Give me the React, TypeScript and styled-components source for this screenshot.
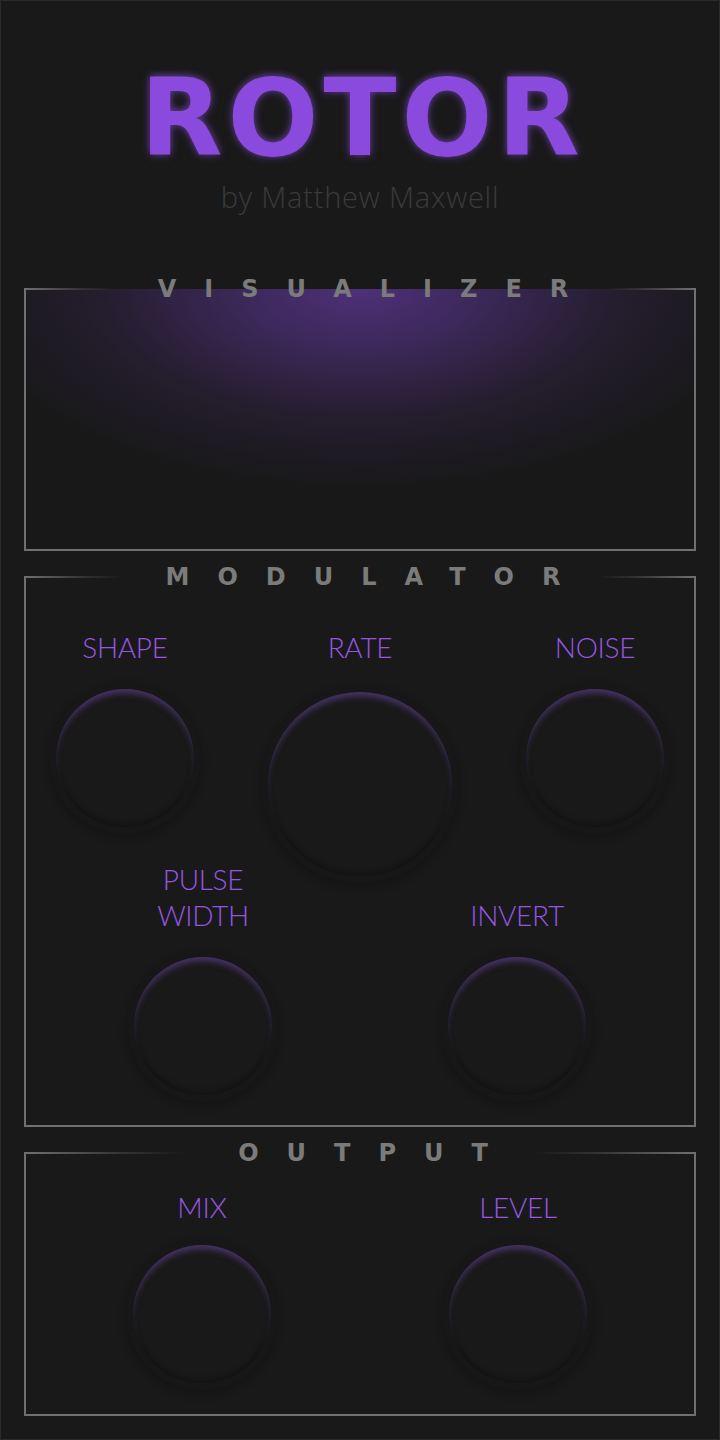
import React from "react";
import styled, { createGlobalStyle } from "styled-components";

const Global = createGlobalStyle`
  html, body { margin: 0; padding: 0; background: #191919; }
  * { box-sizing: border-box; }
`;

const Page = styled.div`
  width: 720px;
  height: 1440px;
  border: 1px solid #2b2b2b;
  background: #191919;
  padding: 0 23px;
  display: flex;
  flex-direction: column;
  gap: 26px;
`;

const Header = styled.header`
  display: flex;
  flex-direction: column;
  align-items: center;
  padding-top: 74px;
  margin-bottom: 48px;
`;

const Logo = styled.h1`
  margin: 0;
  font-family: "DejaVu Sans", sans-serif;
  font-weight: 700;
  font-size: 107px;
  line-height: 86px;
  letter-spacing: 5px;
  padding-left: 5px;
  color: #8a4ade;
  text-shadow: 0 0 8px rgba(150, 80, 240, 0.55), 0 -2px 6px rgba(190, 140, 255, 0.15);
`;

const Byline = styled.div`
  margin-top: 18px;
  font-family: "Open Sans", sans-serif;
  font-weight: 300;
  font-size: 29px;
  line-height: 36px;
  letter-spacing: 0.8px;
  color: #3b3b3b;
`;

const Frame = styled.section<{ $height?: number; $glow?: boolean; $pb?: number }>`
  display: flex;
  flex-direction: column;
  border: 2px solid #707070;
  border-top: none;
  ${(p) => (p.$height ? `height: ${p.$height}px;` : "")}
  padding-bottom: ${(p) => p.$pb ?? 30}px;
  background: ${(p) =>
    p.$glow
      ? "radial-gradient(ellipse 400px 200px at 50% 0%, rgba(78, 48, 120, 1) 0%, rgba(64, 42, 96, 0.9) 30%, rgba(44, 33, 60, 0.6) 65%, rgba(24, 24, 24, 0) 100%), #181818"
      : "#191919"};
`;

const Head = styled.div`
  display: flex;
  align-items: center;
  height: 24px;
  margin: -12px -2px 0;
`;

const Rule = styled.div<{ $dir: "left" | "right" }>`
  flex: 1;
  height: 2px;
  background: linear-gradient(
    ${(p) => (p.$dir === "left" ? "to right" : "to left")},
    #707070 0%,
    rgba(112, 112, 112, 0.3) 55%,
    rgba(112, 112, 112, 0) 90%
  );
`;

const SectionTitle = styled.h2`
  margin: 0;
  font-family: "DejaVu Sans", sans-serif;
  font-weight: 700;
  font-size: 24px;
  line-height: 24px;
  letter-spacing: 28px;
  padding-left: 34px;
  color: #7b7b7b;
  white-space: nowrap;
`;

const Row = styled.div<{ $justify: string; $gap?: number; $align?: string; $mt: number }>`
  display: flex;
  justify-content: ${(p) => p.$justify};
  align-items: ${(p) => p.$align ?? "flex-start"};
  gap: ${(p) => p.$gap ?? 0}px;
  padding: 0 23px;
  margin-top: ${(p) => p.$mt}px;
`;

const Cell = styled.div<{ $size: number }>`
  width: ${(p) => p.$size + 14}px;
  display: flex;
  flex-direction: column;
  align-items: center;
`;

const Label = styled.div`
  font-family: "Lato", sans-serif;
  font-weight: 300;
  font-size: 28px;
  line-height: 36px;
  letter-spacing: -0.3px;
  color: #9656e2;
  text-align: center;
  white-space: nowrap;
`;

const Knob = styled.div<{ $size: number; $gap: number }>`
  width: ${(p) => p.$size}px;
  height: ${(p) => p.$size}px;
  margin-top: ${(p) => p.$gap}px;
  border-radius: 50%;
  background: #191919;
  box-shadow:
    inset 0 6px 6px -2px rgba(98, 68, 148, 0.65),
    inset 0 -4px 5px rgba(0, 0, 0, 0.2),
    0 0 0 7px #171717,
    0 4px 9px 8px rgba(0, 0, 0, 0.18);
`;

type KnobSpec = { label: React.ReactNode; size?: number; gap?: number };

const Control = ({ label, size = 138, gap = 24 }: KnobSpec) => (
  <Cell $size={size}>
    <Label>{label}</Label>
    <Knob $size={size} $gap={gap} />
  </Cell>
);

const Section = ({
  title,
  children,
  height,
  glow,
  pb,
}: {
  title: string;
  children?: React.ReactNode;
  height?: number;
  glow?: boolean;
  pb?: number;
}) => (
  <Frame $height={height} $glow={glow} $pb={pb}>
    <Head>
      <Rule $dir="left" />
      <SectionTitle>{title}</SectionTitle>
      <Rule $dir="right" />
    </Head>
    {children}
  </Frame>
);

export default function App() {
  return (
    <>
      <Global />
      <Page>
        <Header>
          <Logo>ROTOR</Logo>
          <Byline>by Matthew Maxwell</Byline>
        </Header>
        <Section title="VISUALIZER" height={262} glow />
        <Section title="MODULATOR">
          <Row $justify="space-between" $mt={40}>
            <Control label="SHAPE" />
            <Control label="RATE" size={184} gap={27} />
            <Control label="NOISE" />
          </Row>
          <Row $justify="center" $gap={162} $align="flex-end" $mt={-15}>
            <Control
              label={
                <>
                  PULSE
                  <br />
                  WIDTH
                </>
              }
            />
            <Control label="INVERT" />
          </Row>
        </Section>
        <Section title="OUTPUT" pb={31}>
          <Row $justify="center" $gap={164} $mt={24}>
            <Control label="MIX" gap={20} />
            <Control label="LEVEL" gap={20} />
          </Row>
        </Section>
      </Page>
    </>
  );
}
